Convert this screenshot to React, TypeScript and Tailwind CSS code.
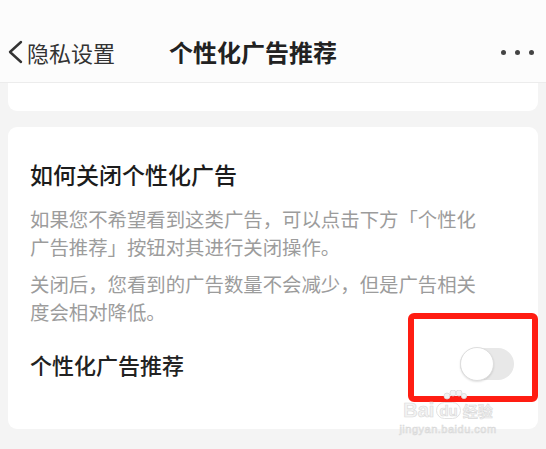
import React from 'react';

const font = "font-['Noto_Sans_CJK_SC','Noto_Sans',sans-serif]";

const App = () => {
  return (
    <div className={`relative w-[546px] h-[449px] overflow-hidden bg-[#f4f4f4] ${font}`}>
      {/* Header */}
      <header className="relative h-[83px] bg-[#fcfcfc] border-b border-[#ececec]">
        <div className="absolute left-0 right-0 top-[36px] flex items-center h-[32px]">
          <div className="flex items-center pl-[6px]">
            <svg width="18" height="24" viewBox="0 0 18 24" className="text-[#333]">
              <path d="M15 2 L4 12 L15 22" fill="none" stroke="currentColor" strokeWidth="2.4" strokeLinecap="round" strokeLinejoin="round" />
            </svg>
            <span className="ml-[3px] text-[22px] leading-[32px] text-[#333]">隐私设置</span>
          </div>
          <span className="absolute left-[169px] text-[24px] leading-[32px] font-bold text-[#222]">个性化广告推荐</span>
          <div className="ml-auto mr-[12px] flex items-center gap-[9px]">
            <span className="w-[5px] h-[5px] rounded-full bg-[#444]" />
            <span className="w-[5px] h-[5px] rounded-full bg-[#444]" />
            <span className="w-[5px] h-[5px] rounded-full bg-[#444]" />
          </div>
        </div>
      </header>

      {/* Card remnant */}
      <div className="mx-[8px] h-[28px] bg-white rounded-b-[9px]" />

      {/* Main card */}
      <section className="relative mx-[8px] mt-[16px] bg-white rounded-[9px] pt-[32px] pl-[22px] pr-[24px] pb-[45px]">
        <h2 className="text-[23px] leading-[30px] font-medium text-[#1c1c1c]">如何关闭个性化广告</h2>
        <p className="mt-[16px] w-[480px] text-[19.4px] leading-[28px] text-[#9c9c9c]">
          如果您不希望看到这类广告，可以点击下方「个性化<br />广告推荐」按钮对其进行关闭操作。
        </p>
        <p className="mt-[9px] w-[480px] text-[19.4px] leading-[28px] text-[#9c9c9c]">
          关闭后，您看到的广告数量不会减少，但是广告相关<br />度会相对降低。
        </p>
        <div className="mt-[18px] h-[40px] flex items-center justify-between">
          <span className="text-[22px] font-medium text-[#222]">个性化广告推荐</span>
          <div className="relative w-[54px] h-[32px] rounded-full bg-[#e8e8e8]">
            <div className="absolute left-0 top-[-1px] w-[34px] h-[34px] rounded-full bg-white border border-[#dedede] shadow-[0_1px_2px_rgba(0,0,0,0.12)]" />
          </div>
        </div>

        {/* Red highlight */}
        <div className="absolute left-[400px] top-[186px] w-[130px] h-[89px] border-[6px] border-[#ff1d12] rounded-[6px]" />
      </section>

      {/* Watermark */}
      <div className="absolute left-[400px] top-[390px] w-[96px] flex flex-col items-center font-['Liberation_Sans',sans-serif] text-[#f3f3f3] [-webkit-text-stroke:0.6px_#d9d9d9]">
        <svg width="24" height="10" viewBox="0 0 24 10" className="ml-[14px]">
          <circle cx="4" cy="6" r="3" fill="#f3f3f3" stroke="#dadada" strokeWidth="0.8" />
          <circle cx="10" cy="3" r="3" fill="#f3f3f3" stroke="#dadada" strokeWidth="0.8" />
          <circle cx="16" cy="3" r="3" fill="#f3f3f3" stroke="#dadada" strokeWidth="0.8" />
          <circle cx="21" cy="6" r="2.6" fill="#f3f3f3" stroke="#dadada" strokeWidth="0.8" />
        </svg>
        <div className="flex items-center h-[20px] gap-[2px]">
          <span className="text-[20px] font-bold leading-none">Bai</span>
          <span className="text-[15px] font-bold leading-none px-[2px] rounded-full border border-[#e2e2e2]">du</span>
          <span className={`text-[15px] font-bold leading-none ${font}`}>经验</span>
        </div>
        <span className="mt-[2px] text-[11px] leading-[14px] tracking-[0.5px]">jingyan.baidu.com</span>
      </div>
    </div>
  );
};

export default App;
